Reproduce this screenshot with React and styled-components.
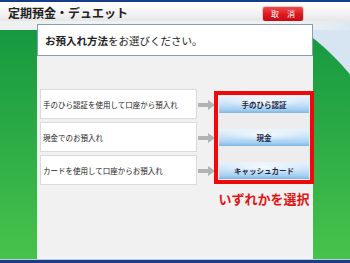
import React from 'react';
import styled, { createGlobalStyle } from 'styled-components';

const GlobalStyle = createGlobalStyle`
  html, body {
    margin: 0;
    padding: 0;
  }
  body {
    font-family: "Noto Sans CJK JP", "Noto Sans", sans-serif;
    background: #ffffff;
  }
`;

const options = [
  { id: 'palm', text: '手のひら認証を使用して口座から預入れ', button: '手のひら認証' },
  { id: 'cash', text: '現金でのお預入れ', button: '現金' },
  { id: 'card', text: 'カードを使用して口座からお預入れ', button: 'キャッシュカード' },
];

const Arrow = () => (
  <svg width="17" height="10" viewBox="0 0 17 10">
    <path d="M0 3 H10 V0 L17 5 L10 10 V7 H0 Z" fill="#b3b3b3" />
  </svg>
);

const App = () => {
  return (
    <Screen>
      <GlobalStyle />
      <Header>
        <Title>定期預金・デュエット</Title>
        <CancelButton>取　消</CancelButton>
      </Header>
      <Stage>
        <Panel>
          <PanelTitle>
            <strong>お預入れ方法</strong>をお選びください。
          </PanelTitle>
          <Body>
            <OptionList>
              {options.map((o) => (
                <OptionRow key={o.id}>
                  <OptionBox>{o.text}</OptionBox>
                  <ArrowCell>
                    <Arrow />
                  </ArrowCell>
                </OptionRow>
              ))}
            </OptionList>
            <SelectColumn>
              <SelectBox>
                {options.map((o) => (
                  <BlueButton key={o.id}>{o.button}</BlueButton>
                ))}
              </SelectBox>
              <Hint>いずれかを選択</Hint>
            </SelectColumn>
          </Body>
        </Panel>
      </Stage>
      <BottomLine />
    </Screen>
  );
};

export default App;

const Screen = styled.div`
  width: 350px;
  height: 263px;
  display: flex;
  flex-direction: column;
  overflow: hidden;
`;

const Header = styled.div`
  height: 19px;
  flex: none;
  border-top: 2px solid #173c8a;
  background: linear-gradient(to bottom, #ffffff 0%, #f3f3f3 60%, #e6e6e6 100%);
  display: flex;
  align-items: center;
  justify-content: space-between;
  padding: 0 47px 0 8px;
`;

const Title = styled.div`
  font-size: 12px;
  font-weight: 700;
  color: #222222;
  line-height: 1;
  margin-top: 2px;
`;

const CancelButton = styled.div`
  width: 40px;
  height: 14px;
  margin-top: 4px;
  border-radius: 2px;
  background: linear-gradient(to bottom, #f04a4a 0%, #e01a1f 50%, #c40b12 100%);
  box-shadow: 0 0 0 1px #d9d0d0;
  color: #ffffff;
  font-size: 8px;
  line-height: 14px;
  text-align: center;
`;

const Stage = styled.div`
  flex: 1;
  display: flex;
  padding: 3px 39px 0 37px;
  background:
    linear-gradient(to right, #eef1ef 0, #eef1ef 300px, #dce8f1 350px) top left / 100% 9px no-repeat,
    radial-gradient(circle 246px at -151px 209px, transparent 245px, #d6e5f1 246px) top right / 39px 100% no-repeat,
    linear-gradient(to bottom, #14973f 0%, #2aaa45 45%, #47c24b 100%);
`;

const Panel = styled.div`
  flex: 1;
  display: flex;
  flex-direction: column;
  background: #f1f1f1;
  border-left: 1px solid #e8f4e8;
`;

const PanelTitle = styled.div`
  height: 30px;
  flex: none;
  background: #ffffff;
  border: 1px solid #8a9bb8;
  margin-left: -1px;
  display: flex;
  align-items: center;
  padding-left: 7px;
  font-size: 10.5px;
  color: #222222;

  strong {
    font-weight: 700;
  }
`;

const Body = styled.div`
  display: flex;
  padding: 33px 0 0 2px;
`;

const OptionList = styled.div`
  display: flex;
  flex-direction: column;
  row-gap: 3px;
`;

const OptionRow = styled.div`
  display: flex;
  align-items: center;
`;

const OptionBox = styled.div`
  width: 153px;
  height: 28px;
  background: #ffffff;
  border: 1px solid #dadada;
  display: flex;
  align-items: center;
  padding-left: 2px;
  box-sizing: content-box;
  font-size: 7.5px;
  color: #1a1a1a;
  white-space: nowrap;
`;

const ArrowCell = styled.div`
  width: 18px;
  display: flex;
  justify-content: flex-end;
  padding-top: 1px;
`;

const SelectColumn = styled.div`
  width: 98px;
  display: flex;
  flex-direction: column;
  align-items: center;
  padding-top: 2px;
`;

const SelectBox = styled.div`
  width: 90px;
  height: 84px;
  border: 4px solid #ee0a0a;
  background: #ededed;
  display: flex;
  flex-direction: column;
  row-gap: 16px;
  padding: 1px 1px 0;
`;

const BlueButton = styled.div`
  height: 17px;
  background:
    radial-gradient(ellipse 45% 40% at 50% 30%, rgba(255, 255, 255, 0.75), rgba(255, 255, 255, 0) 100%),
    linear-gradient(to bottom, #e8f3fc 0%, #cbe4f8 45%, #a6d0f1 80%, #7db7e5 100%);
  color: #1f2945;
  font-size: 7.5px;
  font-weight: 700;
  line-height: 17px;
  text-align: center;
  white-space: nowrap;
`;

const Hint = styled.div`
  margin-top: 7px;
  font-size: 13px;
  font-weight: 700;
  color: #e31414;
  line-height: 16px;
  white-space: nowrap;
`;

const BottomLine = styled.div`
  height: 3px;
  flex: none;
  background: #1b3d85;
  border-top: 1px solid #b9cbe0;
`;
